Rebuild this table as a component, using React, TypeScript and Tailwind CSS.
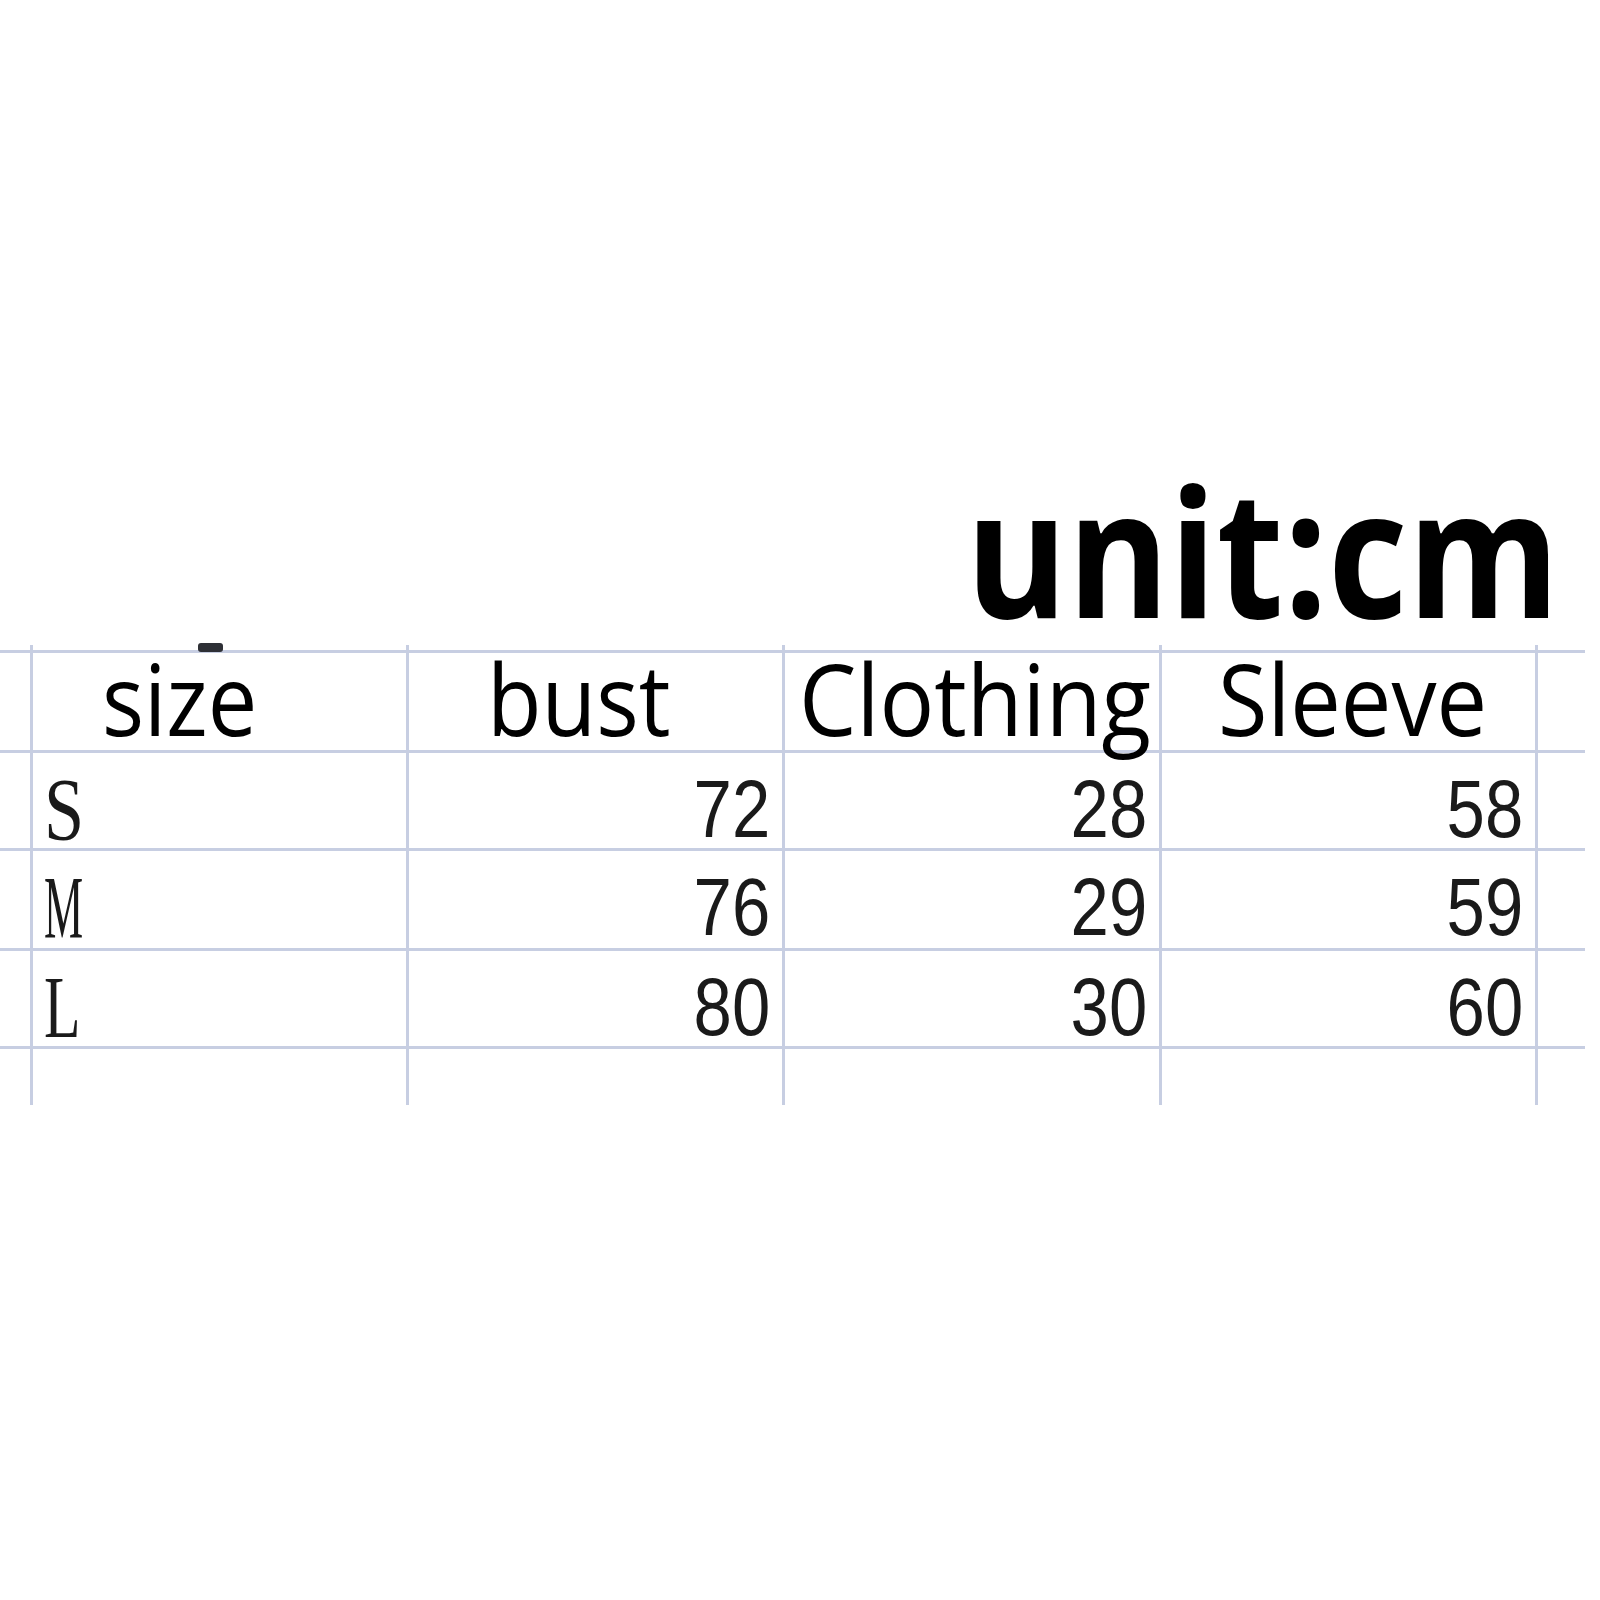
import React from "react";

const rows = [
  { size: "S", sc: "scale-x-[0.82]", bust: "72", clothing: "28", sleeve: "58", h: "h-[98px]" },
  { size: "M", sc: "scale-x-[0.5]", bust: "76", clothing: "29", sleeve: "59", h: "h-[100px]" },
  { size: "L", sc: "scale-x-[0.68]", bust: "80", clothing: "30", sleeve: "60", h: "h-[98px]" },
];

const stub = "w-[33px] shrink-0 border-r-[3px] border-[#c7cee2]";
const col = "w-[376px] shrink-0 border-r-[3px] border-[#c7cee2]";
const col3 = "w-[377px] shrink-0 border-r-[3px] border-[#c7cee2]";
const tail = "w-[47px] shrink-0";

function Num({ v }: { v: string }) {
  return (
    <div className="h-full pr-[12px] text-right leading-[112px] text-[82px] text-[#1a1a1a] font-['Liberation_Sans',sans-serif]">
      <span className="inline-block origin-right scale-x-[0.84]">{v}</span>
    </div>
  );
}

function Head({ t, pl, sc }: { t: string; pl: string; sc: string }) {
  return (
    <div className={`h-full ${pl} leading-[91px] text-[98px] font-medium text-black font-['Open_Sans',sans-serif] whitespace-nowrap`}>
      <span className={`inline-block origin-left ${sc}`}>{t}</span>
    </div>
  );
}

export default function App() {
  return (
    <div className="relative w-[1600px] h-[1600px] overflow-hidden bg-white pt-[460px]">
      <div className="h-[178px] w-[1585px] pr-[25px] text-right leading-[178px] text-[178px] font-bold text-black font-['Open_Sans',sans-serif] whitespace-nowrap">
        <span className="inline-block origin-right scale-x-[0.87]">unit:cm</span>
      </div>

      <div className="relative mt-[7px] w-[1585px]">
        <div className="absolute left-[198px] top-[-2px] h-[9px] w-[25px] rounded-[3px] bg-[#2e3036]" />

        <div className="flex h-[5px]">
          <div className={stub} />
          <div className={col} />
          <div className={col} />
          <div className={col3} />
          <div className={col} />
          <div className={tail} />
        </div>

        <div className="flex h-[103px] border-y-[3px] border-[#c7cee2]">
          <div className={stub} />
          <div className={col}>
            <Head t="size" pl="pl-[69px]" sc="scale-x-[0.9]" />
          </div>
          <div className={col}>
            <Head t="bust" pl="pl-[78px]" sc="scale-x-[0.91]" />
          </div>
          <div className={col3}>
            <Head t="Clothing" pl="pl-[14px]" sc="scale-x-[0.93]" />
          </div>
          <div className={col}>
            <Head t="Sleeve" pl="pl-[56px]" sc="scale-x-[0.92]" />
          </div>
          <div className={tail} />
        </div>

        {rows.map((r) => (
          <div key={r.size} className={`flex ${r.h} border-b-[3px] border-[#c7cee2]`}>
            <div className={stub} />
            <div className={col}>
              <div className="h-full pl-[11px] leading-[114px] text-[88px] text-[#1a1a1a] font-['Liberation_Serif',serif]">
                <span className={`inline-block origin-left ${r.sc}`}>{r.size}</span>
              </div>
            </div>
            <div className={col}>
              <Num v={r.bust} />
            </div>
            <div className={col3}>
              <Num v={r.clothing} />
            </div>
            <div className={col}>
              <Num v={r.sleeve} />
            </div>
            <div className={tail} />
          </div>
        ))}

        <div className="flex h-[56px]">
          <div className={stub} />
          <div className={col} />
          <div className={col} />
          <div className={col3} />
          <div className={col} />
          <div className={tail} />
        </div>
      </div>
    </div>
  );
}
